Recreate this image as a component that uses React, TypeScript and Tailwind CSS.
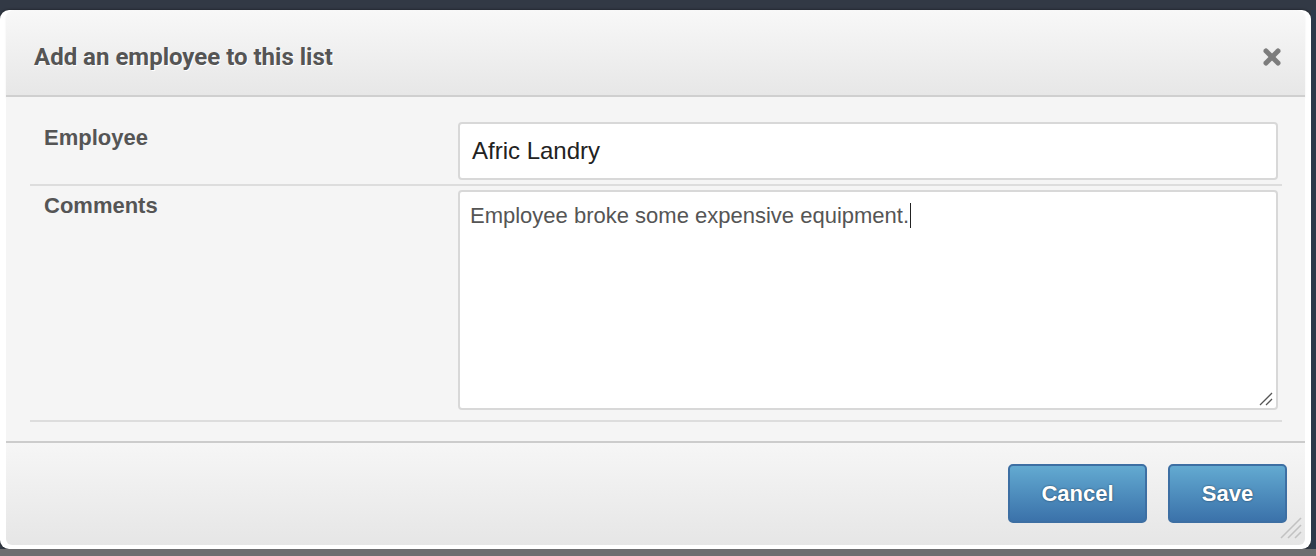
import React from "react";

export default function App() {
  return (
    <div className="w-[1316px] h-[556px] overflow-hidden bg-[#333a45] flex flex-col">
      <div className="h-[10px] shrink-0 bg-[#323945]" />
      <div className="flex flex-1 min-h-0">
        <div className="w-[1311px] shrink-0 h-[539px] bg-white rounded-[9px] px-[6px] pb-[4px] flex flex-col shadow-[0_0_3px_rgba(0,0,0,0.5)]">
          {/* Header */}
          <div className="h-[87px] shrink-0 box-border border-b-2 border-[#cfcfcf] rounded-t-[8px] bg-gradient-to-b from-[#f8f8f8] to-[#e7e7e7] flex items-center justify-between pl-[28px] pr-[23px] shadow-[0_1px_2px_rgba(0,0,0,0.08)]">
            <div
              className="text-[24px] font-bold text-[#555] [text-shadow:1px_1px_0_#fff] pt-[8px]"
              style={{ fontFamily: "Roboto, 'Noto Sans', sans-serif" }}
            >
              Add an employee to this list
            </div>
            <svg width="20" height="20" viewBox="0 0 20 20" className="mt-[9px]">
              <g stroke="#777" strokeWidth="5" strokeLinecap="round" opacity="0.95">
                <line x1="4" y1="4" x2="16" y2="16" />
                <line x1="16" y1="4" x2="4" y2="16" />
              </g>
            </svg>
          </div>

          {/* Body */}
          <div
            className="shrink-0 bg-[#f5f5f5] pl-[24px] pr-[23px] pt-[25px] pb-[19px] border-b-2 border-[#cccccc]"
            style={{ fontFamily: "'Liberation Sans', Arial, sans-serif" }}
          >
            <div className="flex pb-[4px] border-b-2 border-[#dddddd]">
              <div className="w-[428px] shrink-0 pl-[14px] pt-[3px] text-[22px] font-bold text-[#555] leading-[25px]">
                Employee
              </div>
              <div className="flex-1 pr-[4px]">
                <div className="h-[58px] box-border border-2 border-[#d8d8d8] rounded-[4px] bg-white flex items-center pl-[12px] text-[24px] text-[#222]">
                  Afric Landry
                </div>
              </div>
            </div>
            <div className="flex pt-[4px] pb-[10px] border-b-2 border-[#dddddd]">
              <div className="w-[428px] shrink-0 pl-[14px] pt-[3px] text-[22px] font-bold text-[#555] leading-[25px]">
                Comments
              </div>
              <div className="flex-1 pr-[4px]">
                <div className="relative h-[220px] box-border border-2 border-[#d8d8d8] rounded-[4px] bg-white pl-[10px] pt-[11px] text-[22px] text-[#555] leading-[25px]">
                  <span>Employee broke some expensive equipment.</span>
                  <span className="inline-block w-[1px] h-[25px] bg-[#222] align-top ml-[1px]" />
                  <svg width="16" height="14" viewBox="0 0 16 14" className="absolute right-[2px] bottom-[2px]">
                    <g stroke="#555" strokeWidth="1.3">
                      <line x1="2" y1="13" x2="14" y2="1" />
                      <line x1="8" y1="13" x2="14" y2="7" />
                    </g>
                  </svg>
                </div>
              </div>
            </div>
          </div>

          {/* Footer */}
          <div
            className="relative flex-1 rounded-b-[6px] bg-gradient-to-b from-[#f6f6f6] to-[#e6e6e6] flex justify-end items-start pt-[21px] pr-[18px] gap-[21px]"
            style={{ fontFamily: "'Liberation Sans', Arial, sans-serif" }}
          >
            <button className="w-[139px] h-[59px] rounded-[5px] border-2 border-[#3d6fa3] bg-gradient-to-b from-[#63aad1] to-[#3b72aa] text-white text-[22px] font-bold [text-shadow:0_0_2px_rgba(0,0,0,0.6)]">
              Cancel
            </button>
            <button className="w-[119px] h-[59px] rounded-[5px] border-2 border-[#3d6fa3] bg-gradient-to-b from-[#63aad1] to-[#3b72aa] text-white text-[22px] font-bold [text-shadow:0_0_2px_rgba(0,0,0,0.6)]">
              Save
            </button>
            <svg width="22" height="22" viewBox="0 0 22 22" className="absolute right-[3px] bottom-[6px]">
              <g stroke="#c2c2c2" strokeWidth="1.6">
                <line x1="1" y1="21" x2="21" y2="1" />
                <line x1="8" y1="21" x2="21" y2="8" />
                <line x1="15" y1="21" x2="21" y2="15" />
              </g>
            </svg>
          </div>
        </div>
        <div className="flex-1 bg-[#2d3a4b]" />
      </div>
      <div className="h-[7px] shrink-0 bg-[#6e6e70]" />
    </div>
  );
}
